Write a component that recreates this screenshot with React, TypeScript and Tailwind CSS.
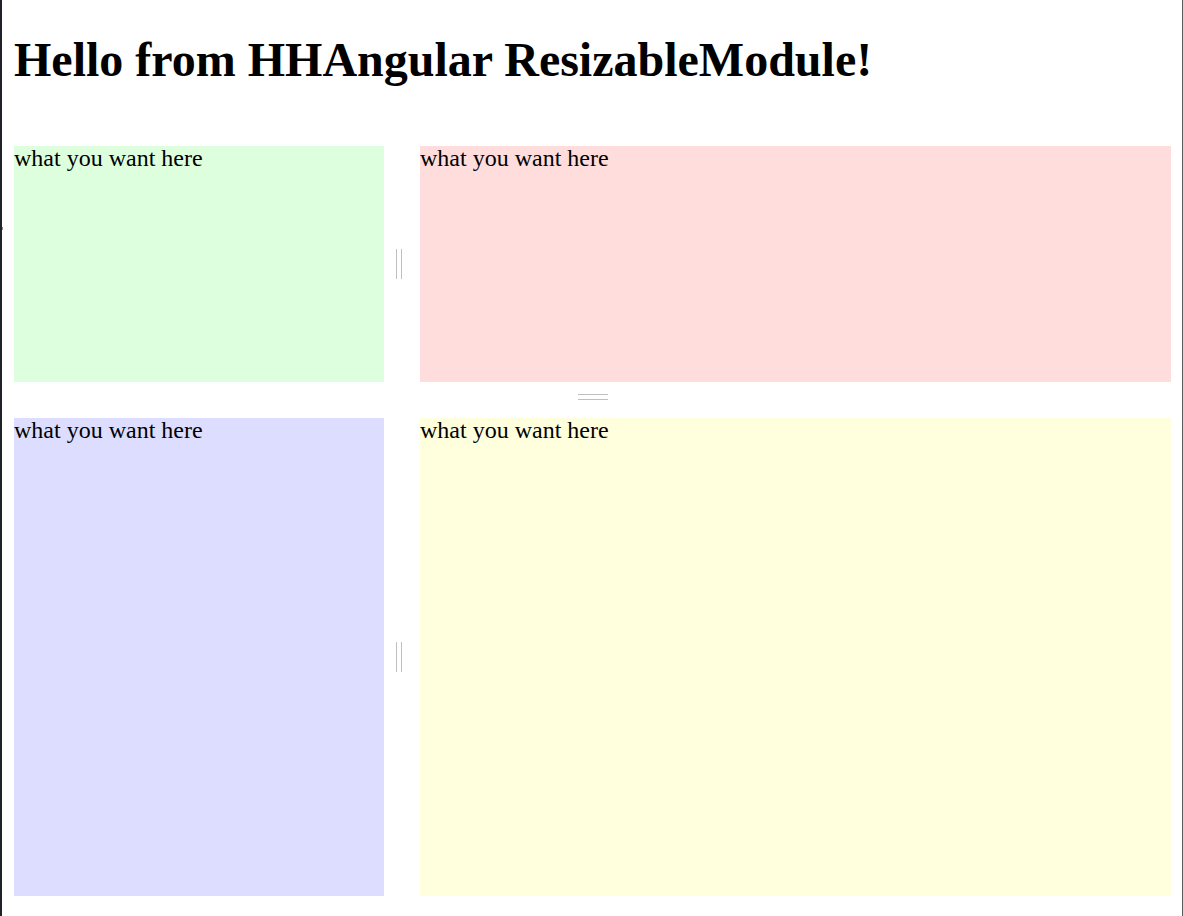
const panelText = "what you want here";

function VHandle() {
  return (
    <div className="flex w-[36px] shrink-0 items-center pl-[12px]">
      <div className="h-[30px] w-[6px] border-x border-[#bfbfbf]" />
    </div>
  );
}

export default function App() {
  return (
    <div
      className="relative h-[916px] w-[1183px] overflow-hidden border-l-2 border-r border-l-[#1f2328] border-r-[#5c5c5c] bg-white pl-[12px] pr-[11px] text-black"
      style={{ fontFamily: '"Liberation Serif", "Times New Roman", serif' }}
    >
      <div className="absolute left-[-2px] top-[227px] h-[3px] w-[3px] bg-[#8a8a8a]" />
      <h1 className="pt-[32px] text-[48px] font-bold leading-[55px]">Hello from HHAngular ResizableModule!</h1>
      <div className="mt-[59px] flex flex-col">
        <div className="flex h-[236px]">
          <div className="w-[370px] shrink-0 bg-[#ddffdd] text-[24px] leading-[24px]">{panelText}</div>
          <VHandle />
          <div className="flex-1 bg-[#ffdddd] text-[24px] leading-[24px]">{panelText}</div>
        </div>
        <div className="flex h-[36px] justify-center pt-[12px]">
          <div className="h-[6px] w-[30px] border-y border-[#bfbfbf]" />
        </div>
        <div className="flex h-[478px]">
          <div className="w-[370px] shrink-0 bg-[#ddddff] text-[24px] leading-[24px]">{panelText}</div>
          <VHandle />
          <div className="flex-1 bg-[#ffffdd] text-[24px] leading-[24px]">{panelText}</div>
        </div>
      </div>
    </div>
  );
}
